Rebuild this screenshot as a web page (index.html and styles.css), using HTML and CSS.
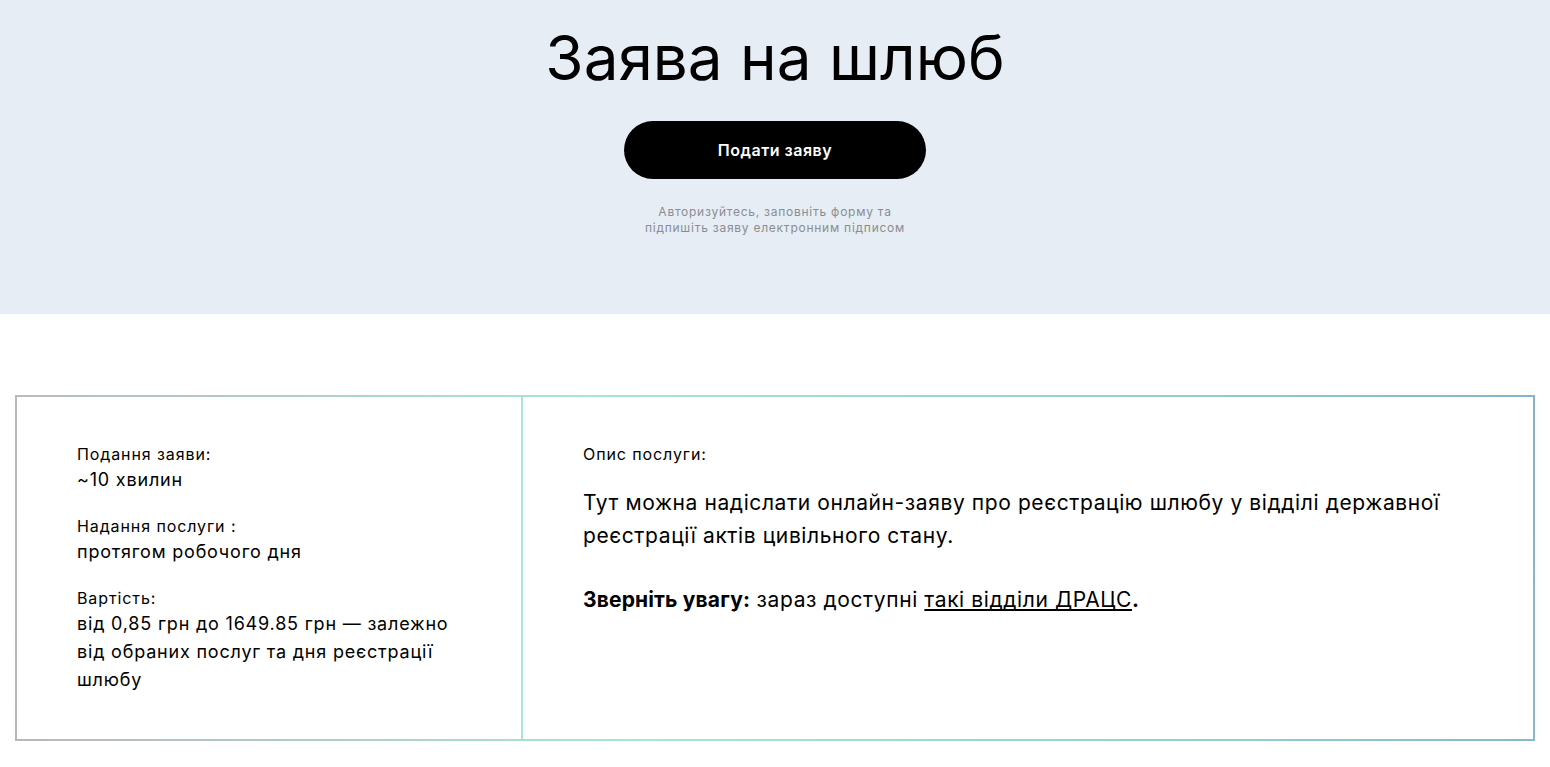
FILE: index.html
```html
<!DOCTYPE html>
<html lang="uk">
<head>
<meta charset="utf-8">
<title>Заява на шлюб</title>
<link rel="stylesheet" href="styles.css">
</head>
<body>
<header class="hero">
  <h1 class="hero-title">Заява на шлюб</h1>
  <a class="hero-btn" href="#">Подати заяву</a>
  <p class="hero-note">Авторизуйтесь, заповніть форму та<br>підпишіть заяву електронним підписом</p>
</header>
<main class="content">
  <section class="card">
    <div class="card-left">
      <div class="info">
        <div class="info-label">Подання заяви:</div>
        <div class="info-value">~10 хвилин</div>
      </div>
      <div class="info">
        <div class="info-label">Надання послуги :</div>
        <div class="info-value">протягом робочого дня</div>
      </div>
      <div class="info">
        <div class="info-label">Вартість:</div>
        <div class="info-value">від 0,85 грн до 1649.85 грн — залежно від обраних послуг та дня реєстрації шлюбу</div>
      </div>
    </div>
    <div class="card-right">
      <div class="info-label">Опис послуги:</div>
      <p class="desc">Тут можна надіслати онлайн-заяву про реєстрацію шлюбу у відділі державної реєстрації актів цивільного стану.</p>
      <p class="desc"><b>Зверніть увагу:</b> зараз доступні <a href="#">такі відділи ДРАЦС</a><b>.</b></p>
    </div>
  </section>
</main>
</body>
</html>
```
FILE: styles.css
```css
* { box-sizing: border-box; }
html, body { margin: 0; padding: 0; }
body {
  font-family: Inter, "Liberation Sans", sans-serif;
  color: #000;
  background: #fff;
}
.hero {
  background: #e6edf4;
  height: 314px;
  display: flex;
  flex-direction: column;
  align-items: center;
  padding-top: 22px;
}
.hero-title {
  margin: 0;
  font-size: 62px;
  font-weight: 400;
  line-height: 72px;
}
.hero-btn {
  margin-top: 27px;
  width: 302px;
  height: 58px;
  border-radius: 29px;
  background: #000;
  color: #fff;
  text-decoration: none;
  font-size: 16px;
  font-weight: 600;
  letter-spacing: 0.5px;
  display: flex;
  align-items: center;
  justify-content: center;
}
.hero-note {
  margin: 25px 0 0;
  font-size: 12px;
  line-height: 16px;
  letter-spacing: 0.75px;
  color: #8a8d92;
  text-align: center;
}
.content {
  padding: 81px 15px 0;
}
.card {
  display: flex;
  border: 2px solid transparent;
  border-image: linear-gradient(80deg, #bab6bd 0%, #a6e6d4 40%, #95d0c8 75%, #84b4cc 100%) 1;
  height: 346px;
}
.card-left {
  width: 506px;
  border-right: 2px solid #a6e6d4;
  padding: 47px 60px 0;
  display: flex;
  flex-direction: column;
  gap: 22px;
}
.card-right {
  flex: 1;
  padding: 47px 60px 0;
}
.info-label {
  font-size: 16px;
  line-height: 20px;
  letter-spacing: 0.9px;
}
.info-value {
  font-size: 18px;
  line-height: 28px;
  letter-spacing: 0.8px;
  margin-top: 2px;
}
.desc {
  margin: 22px 0 0;
  font-size: 21px;
  line-height: 33px;
  letter-spacing: 0.6px;
}
.desc + .desc { margin-top: 31px; }
.desc b { font-weight: 700; letter-spacing: 0.15px; }
.desc a {
  color: #000;
  text-decoration: underline;
  text-decoration-skip-ink: none;
  text-underline-offset: 2px;
}
```
